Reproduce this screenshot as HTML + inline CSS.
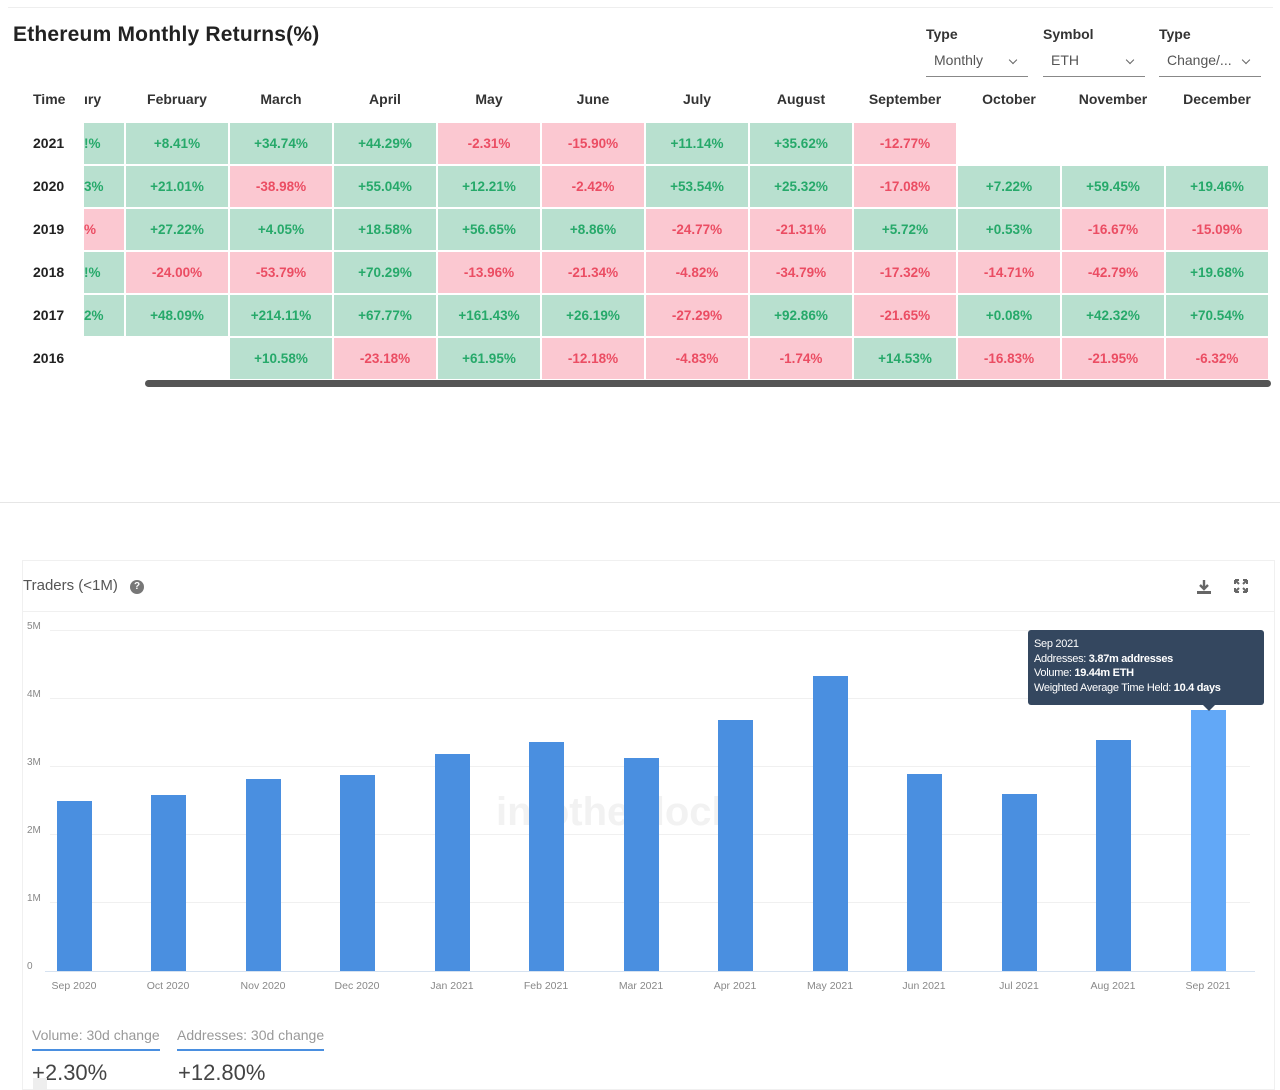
<!DOCTYPE html>
<html><head><meta charset="utf-8"><style>
*{margin:0;padding:0;box-sizing:border-box}
body{width:1280px;height:1090px;background:#fff;font-family:"Liberation Sans",sans-serif;position:relative;overflow:hidden;color:#333}
.a{position:absolute}
.grid{position:absolute;left:84px;top:123px;display:grid;grid-template-columns:40px repeat(11,102px);grid-auto-rows:41px;gap:2px}
.grid div{display:flex;align-items:center;justify-content:center;font-size:13.5px;font-weight:bold;overflow:hidden}
.g{background:#b8e0cf;color:#26a96a}
.r{background:#fbc8d1;color:#eb4d63}
.grid div.p{justify-content:flex-start;padding-left:0}
.hd{position:absolute;top:91px;font-size:14px;font-weight:bold;color:#333;width:102px;text-align:center}
.yr{position:absolute;left:33px;font-size:14px;font-weight:bold;color:#222}
.sel{position:absolute;top:26px;font-size:14px}
.sel b{display:block;color:#333;margin-bottom:10px}
.sel span{display:block;color:#555;border-bottom:1px solid #888;padding:0 0 8px 8px;position:relative}
.sel span:after{content:"";position:absolute;right:12px;top:5px;width:5px;height:5px;border-right:1px solid #666;border-bottom:1px solid #666;transform:rotate(45deg)}
.yl{position:absolute;left:27px;font-size:10px;color:#888}
.gl{position:absolute;left:50px;width:1200px;height:1px;background:#f0f0f0}
.bar{position:absolute;width:35px;background:#4a8fe0}
.xl{position:absolute;top:980px;font-size:10.5px;color:#888;width:80px;text-align:center}
</style></head><body>
<div class="a" style="left:8px;top:7px;width:1265px;height:1px;background:#eee"></div>
<div class="a" style="left:13px;top:23px;font-size:21px;color:#222;font-weight:bold;letter-spacing:0.2px">Ethereum Monthly Returns(%)</div>
<div class="sel" style="left:926px;width:102px"><b>Type</b><span>Monthly</span></div>
<div class="sel" style="left:1043px;width:102px"><b>Symbol</b><span>ETH</span></div>
<div class="sel" style="left:1159px;width:102px"><b>Type</b><span>Change/...</span></div>

<div class="a" style="left:33px;top:91px;font-size:14px;font-weight:bold">Time</div>
<div class="a" style="left:84px;top:91px;font-size:14px;font-weight:bold">ıry</div>
<div class="hd" style="left:126px">February</div>
<div class="hd" style="left:230px">March</div>
<div class="hd" style="left:334px">April</div>
<div class="hd" style="left:438px">May</div>
<div class="hd" style="left:542px">June</div>
<div class="hd" style="left:646px">July</div>
<div class="hd" style="left:750px">August</div>
<div class="hd" style="left:854px">September</div>
<div class="hd" style="left:958px">October</div>
<div class="hd" style="left:1062px">November</div>
<div class="hd" style="left:1166px">December</div>

<div class="yr" style="top:135px">2021</div>
<div class="yr" style="top:178px">2020</div>
<div class="yr" style="top:221px">2019</div>
<div class="yr" style="top:264px">2018</div>
<div class="yr" style="top:307px">2017</div>
<div class="yr" style="top:350px">2016</div>

<div class="grid">
<div class="g p">!%</div><div class="g">+8.41%</div><div class="g">+34.74%</div><div class="g">+44.29%</div><div class="r">-2.31%</div><div class="r">-15.90%</div><div class="g">+11.14%</div><div class="g">+35.62%</div><div class="r">-12.77%</div><div></div><div></div><div></div>
<div class="g p">3%</div><div class="g">+21.01%</div><div class="r">-38.98%</div><div class="g">+55.04%</div><div class="g">+12.21%</div><div class="r">-2.42%</div><div class="g">+53.54%</div><div class="g">+25.32%</div><div class="r">-17.08%</div><div class="g">+7.22%</div><div class="g">+59.45%</div><div class="g">+19.46%</div>
<div class="r p">%</div><div class="g">+27.22%</div><div class="g">+4.05%</div><div class="g">+18.58%</div><div class="g">+56.65%</div><div class="g">+8.86%</div><div class="r">-24.77%</div><div class="r">-21.31%</div><div class="g">+5.72%</div><div class="g">+0.53%</div><div class="r">-16.67%</div><div class="r">-15.09%</div>
<div class="g p">!%</div><div class="r">-24.00%</div><div class="r">-53.79%</div><div class="g">+70.29%</div><div class="r">-13.96%</div><div class="r">-21.34%</div><div class="r">-4.82%</div><div class="r">-34.79%</div><div class="r">-17.32%</div><div class="r">-14.71%</div><div class="r">-42.79%</div><div class="g">+19.68%</div>
<div class="g p">2%</div><div class="g">+48.09%</div><div class="g">+214.11%</div><div class="g">+67.77%</div><div class="g">+161.43%</div><div class="g">+26.19%</div><div class="r">-27.29%</div><div class="g">+92.86%</div><div class="r">-21.65%</div><div class="g">+0.08%</div><div class="g">+42.32%</div><div class="g">+70.54%</div>
<div></div><div></div><div class="g">+10.58%</div><div class="r">-23.18%</div><div class="g">+61.95%</div><div class="r">-12.18%</div><div class="r">-4.83%</div><div class="r">-1.74%</div><div class="g">+14.53%</div><div class="r">-16.83%</div><div class="r">-21.95%</div><div class="r">-6.32%</div>
</div>
<div class="a" style="left:145px;top:380px;width:1126px;height:7px;border-radius:4px;background:#555"></div>

<div class="a" style="left:0;top:502px;width:1280px;height:1px;background:#e6e6e6"></div>

<div class="a" style="left:22px;top:560px;width:1253px;height:530px;border:1px solid #f0f0f0"></div>
<div class="a" style="left:23px;top:577px;font-size:15px;color:#555">Traders (&lt;1M)</div>
<div class="a" style="left:130px;top:580px;width:14px;height:14px;border-radius:50%;background:#777;color:#fff;font-size:10px;font-weight:bold;text-align:center;line-height:14px">?</div>
<svg class="a" style="left:1195px;top:578px" width="18" height="18" viewBox="0 0 18 18"><path d="M9 2v8M5 7l4 4 4-4" stroke="#666" stroke-width="2.4" fill="none"/><rect x="2" y="13" width="14" height="3" fill="#666"/></svg>
<svg class="a" style="left:1233px;top:578px" width="16" height="16" viewBox="0 0 16 16" stroke="#666" stroke-width="2" fill="none"><path d="M2 2l4 4M14 2l-4 4M2 14l4-4M14 14l-4-4M2 2h4M2 2v4M14 2h-4M14 2v4M2 14h4M2 14v-4M14 14h-4M14 14v-4"/></svg>
<div class="a" style="left:23px;top:611px;width:1252px;height:1px;background:#f0f0f0"></div>

<div class="yl" style="top:621px">5M</div><div class="gl" style="top:630px"></div>
<div class="yl" style="top:689px">4M</div><div class="gl" style="top:698px"></div>
<div class="yl" style="top:757px">3M</div><div class="gl" style="top:766px"></div>
<div class="yl" style="top:825px">2M</div><div class="gl" style="top:834px"></div>
<div class="yl" style="top:893px">1M</div><div class="gl" style="top:902px"></div>
<div class="yl" style="top:961px">0</div>
<div class="a" style="left:45px;top:971px;width:1210px;height:1px;background:#d6e2f0"></div>

<div class="a" style="left:496px;top:790px;font-size:40px;color:#f2f2f2;font-weight:bold">intotheblock</div>

<div class="bar" style="left:57px;top:801px;height:170px"></div>
<div class="bar" style="left:151px;top:795px;height:176px"></div>
<div class="bar" style="left:246px;top:779px;height:192px"></div>
<div class="bar" style="left:340px;top:775px;height:196px"></div>
<div class="bar" style="left:435px;top:754px;height:217px"></div>
<div class="bar" style="left:529px;top:742px;height:229px"></div>
<div class="bar" style="left:624px;top:758px;height:213px"></div>
<div class="bar" style="left:718px;top:720px;height:251px"></div>
<div class="bar" style="left:813px;top:676px;height:295px"></div>
<div class="bar" style="left:907px;top:774px;height:197px"></div>
<div class="bar" style="left:1002px;top:794px;height:177px"></div>
<div class="bar" style="left:1096px;top:740px;height:231px"></div>
<div class="bar" style="left:1191px;top:710px;height:261px;background:#62a8f7"></div>

<div class="xl" style="left:34px">Sep 2020</div>
<div class="xl" style="left:128px">Oct 2020</div>
<div class="xl" style="left:223px">Nov 2020</div>
<div class="xl" style="left:317px">Dec 2020</div>
<div class="xl" style="left:412px">Jan 2021</div>
<div class="xl" style="left:506px">Feb 2021</div>
<div class="xl" style="left:601px">Mar 2021</div>
<div class="xl" style="left:695px">Apr 2021</div>
<div class="xl" style="left:790px">May 2021</div>
<div class="xl" style="left:884px">Jun 2021</div>
<div class="xl" style="left:979px">Jul 2021</div>
<div class="xl" style="left:1073px">Aug 2021</div>
<div class="xl" style="left:1168px">Sep 2021</div>

<div class="a" style="left:1028px;top:630px;width:236px;height:75px;background:#34475f;border-radius:3px;color:#fff;font-size:11px;line-height:14.5px;padding:7px 6px;letter-spacing:-0.3px">Sep 2021<br>Addresses: <b>3.87m addresses</b><br>Volume: <b>19.44m ETH</b><br>Weighted Average Time Held: <b>10.4 days</b></div>
<div class="a" style="left:1203px;top:705px;width:0;height:0;border-left:6px solid transparent;border-right:6px solid transparent;border-top:6px solid #34475f"></div>

<div class="a" style="left:32px;top:1027px;font-size:14px;color:#999;padding-bottom:6px;border-bottom:2px solid #4a8fe0">Volume: 30d change</div>
<div class="a" style="left:177px;top:1027px;font-size:14px;color:#999;padding-bottom:6px;border-bottom:2px solid #4a8fe0">Addresses: 30d change</div>
<div class="a" style="left:32px;top:1060px;font-size:22px;color:#444">+2.30%</div>
<div class="a" style="left:178px;top:1060px;font-size:22px;color:#444">+12.80%</div>
<div class="a" style="left:33px;top:1078px;width:14px;height:12px;background:#eee"></div>
</body></html>
